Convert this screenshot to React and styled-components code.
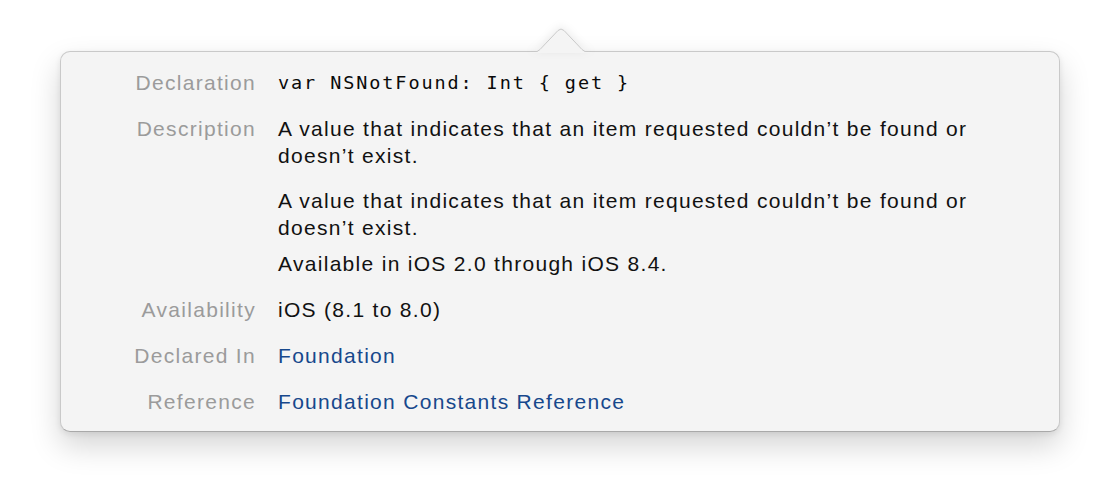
import styled, { createGlobalStyle } from "styled-components";

const GlobalStyle = createGlobalStyle`
  html, body {
    margin: 0;
    background: #ffffff;
  }
  body {
    font-family: "Liberation Sans", Arial, sans-serif;
    -webkit-font-smoothing: antialiased;
  }
`;

// Área da página, o popover fica no alto
const Page = styled.div`
  width: 1120px;
  height: 498px;
  padding: 51px 0 0 60px;
  box-sizing: border-box;
`;

const Popover = styled.div`
  position: relative;
  width: 1000px;
  box-sizing: border-box;
  background: #f4f4f4;
  border: 1px solid #c9c9c9;
  border-bottom-color: #a9a9a9;
  border-radius: 10px;
  box-shadow: 0 14px 30px rgba(0, 0, 0, 0.17), 0 2px 6px rgba(0, 0, 0, 0.08);
  padding: 17px 30px 16px 0;
`;

// Seta no topo do popover
const Arrow = styled.svg`
  position: absolute;
  top: -25px;
  left: 469px;
  filter: drop-shadow(0 -2px 4px rgba(0, 0, 0, 0.08));
`;

const Grid = styled.div`
  display: grid;
  grid-template-columns: 195px 1fr;
  column-gap: 22px;
  row-gap: 19px;
  align-items: start;
`;

const Label = styled.div`
  text-align: right;
  color: #9b9b9b;
  font-size: 21px;
  letter-spacing: 1.3px;
  line-height: 27px;
`;

const Value = styled.div`
  color: ${(p) => (p.$link ? "#17488c" : "#111")};
  font-size: 21px;
  letter-spacing: 1.3px;
  line-height: 27px;
`;

const Code = styled.div`
  font-family: "DejaVu Sans Mono", "Liberation Mono", monospace;
  font-size: 18.5px;
  letter-spacing: 1.9px;
  line-height: 27px;
  color: #0a0a0a;
`;

const Para = styled.p`
  margin: 0 0 ${(p) => p.$gap || 0}px;
`;

export default function App() {
  return (
    <Page>
      <GlobalStyle />
      <Popover>
        <Arrow width="62" height="26" viewBox="0 0 62 26">
          <path
            d="M0 25.5 L3 25.5 Q7 25.5 10 22.5 L28 3.5 Q31 0.5 34 3.5 L52 22.5 Q55 25.5 59 25.5 L62 25.5"
            fill="#f4f4f4"
            stroke="#c9c9c9"
            strokeWidth="1"
          />
          <rect x="0" y="25" width="62" height="2" fill="#f4f4f4" />
        </Arrow>
        <Grid>
          <Label>Declaration</Label>
          <Code>var NSNotFound: Int {"{"} get {"}"}</Code>

          <Label>Description</Label>
          <Value>
            <Para $gap={18}>
              A value that indicates that an item requested couldn’t be found or
              doesn’t exist.
            </Para>
            <Para $gap={9}>
              A value that indicates that an item requested couldn’t be found or
              doesn’t exist.
            </Para>
            <Para>Available in iOS 2.0 through iOS 8.4.</Para>
          </Value>

          <Label>Availability</Label>
          <Value>iOS (8.1 to 8.0)</Value>

          <Label>Declared In</Label>
          <Value $link>Foundation</Value>

          <Label>Reference</Label>
          <Value $link>Foundation Constants Reference</Value>
        </Grid>
      </Popover>
    </Page>
  );
}
